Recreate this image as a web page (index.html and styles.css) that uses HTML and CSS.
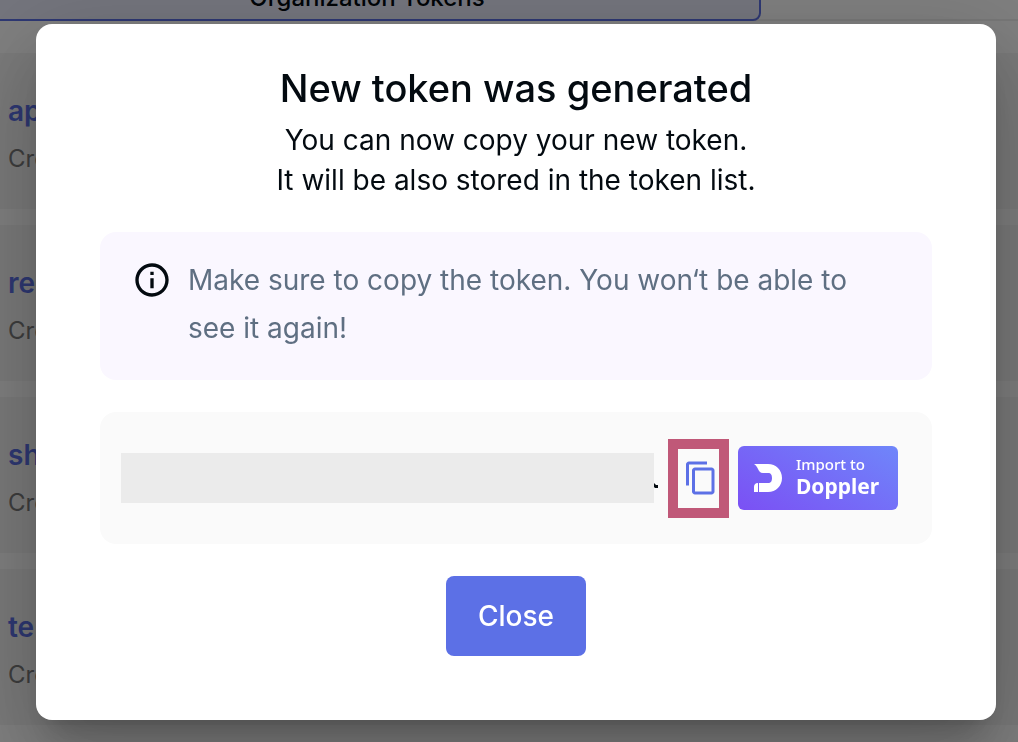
FILE: index.html
```html
<!DOCTYPE html>
<html lang="en">
<head>
    <meta charset="UTF-8">
    <meta name="viewport" content="width=device-width, initial-scale=1.0">
    <title>Organization Tokens</title>
    <link rel="stylesheet" href="styles.css">
</head>
<body>
<main class="page">
    <nav class="tabs">
        <button class="tab" type="button">Organization Tokens</button>
    </nav>
    <ul class="token-list">
        <li class="token-item"><a href="#">ap</a><p>Cre</p></li>
        <li class="token-item"><a href="#">re</a><p>Cre</p></li>
        <li class="token-item"><a href="#">sh</a><p>Cre</p></li>
        <li class="token-item"><a href="#">te</a><p>Cre</p></li>
    </ul>
</main>

<!-- dialog -->
<div class="overlay">
    <section class="modal" role="dialog" aria-modal="true" aria-labelledby="modal-title">
        <h2 id="modal-title">New token was generated</h2>
        <p class="subtitle">You can now copy your new token.<br>It will be also stored in the token list.</p>

        <div class="alert">
            <svg class="icon-info" viewBox="0 0 24 24" aria-hidden="true">
                <path d="M11 7h2v2h-2zm0 4h2v6h-2zm1-9C6.480 2 2 6.480 2 12s4.480 10 10 10 10-4.480 10-10S17.520 2 12 2zm0 18c-4.410 0-8-3.590-8-8s3.590-8 8-8 8 3.590 8 8-3.590 8-8 8z"/>
            </svg>
            <p>Make sure to copy the token. You won‘t be able to see it again!</p>
        </div>

        <div class="token-box">
            <div class="token-value"></div>
            <svg class="token-tail" viewBox="0 0 4 50" aria-hidden="true">
                <path d="M0 30L2 32H4V35H1L0 34z"/>
            </svg>
            <button class="copy" type="button" aria-label="Copy token">
                <svg viewBox="0 0 24 24" aria-hidden="true">
                    <path d="M16 1H4c-1.100 0-2 .9-2 2v14h2V3h12V1zm3 4H8c-1.100 0-2 .9-2 2v14c0 1.100.9 2 2 2h11c1.100 0 2-.9 2-2V7c0-1.100-.9-2-2-2zm0 16H8V7h11v14z"/>
                </svg>
            </button>
            <button class="doppler" type="button">
                <svg viewBox="0 0 28 28" aria-hidden="true">
                    <path d="M0 0H14C22 0 28 6 28 14S22 28 14 28H5V19H14C17 19 18 17 18 14S17 9 14 9H9C6 9 5 7 4 5C3 3 2 1 0 0z"/>
                    <path d="M4 19V28H0V23C0 21 1 19 4 19z"/>
                </svg>
                <span class="doppler-text"><span>Import to</span><strong>Doppler</strong></span>
            </button>
        </div>

        <button class="close" type="button">Close</button>
    </section>
</div>
</body>
</html>
```

FILE: styles.css
```css
* {
    margin: 0;
    padding: 0;
    box-sizing: border-box;
}

body {
    height: 100vh;
    overflow: hidden;
    font-family: Inter, "Liberation Sans", sans-serif;
    font-size: 28px;
    color: #030a10;
    background: #fff;
}

button {
    font-family: inherit;
    border: none;
    cursor: pointer;
}

/* page behind the dialog, scrolled a little */
.page {
    margin: -27px 0 0 -27px;
}

.tabs {
    display: flex;
    height: 48px;
    border-bottom: 2px solid #eee;
}

.tab {
    width: 788px;
    height: 48px;
    font-size: 24px;
    font-weight: 500;
    color: #030a10;
    background: #e8ebfb;
    border: 2px solid #5c70e6;
    border-radius: 8px;
}

.token-list {
    display: grid;
    gap: 16px;
    padding-top: 32px;
    list-style: none;
}

.token-item {
    height: 156px;
    padding: 38px 35px;
    background: #f5f5f5;
}

.token-item a {
    display: block;
    line-height: 40px;
    font-weight: 600;
    color: #5c70e6;
    text-decoration: none;
}

.token-item p {
    margin-top: 8px;
    line-height: 40px;
    font-size: 24px;
    color: #7b7b7b;
}

.overlay {
    position: fixed;
    inset: 0;
    padding: 24px 22px 22px 36px;
    background: rgba(0, 0, 0, .5);
}

.modal {
    display: flex;
    flex-direction: column;
    align-items: center;
    padding: 40px 64px 64px;
    background: #fff;
    border-radius: 16px;
    box-shadow: 0 22px 30px -14px rgba(0, 0, 0, .2), 0 48px 76px 6px rgba(0, 0, 0, .14), 0 18px 92px 16px rgba(0, 0, 0, .12);
}

.modal h2 {
    line-height: 48px;
    font-size: 38px;
    font-weight: 500;
}

.subtitle {
    margin: 8px 0 32px;
    line-height: 40px;
    text-align: center;
}

.alert {
    display: flex;
    gap: 16px;
    width: 100%;
    padding: 24px 32px 28px;
    line-height: 48px;
    color: #5f6f82;
    background: #faf7ff;
    border-radius: 16px;
}

.icon-info {
    flex: none;
    width: 40px;
    height: 48px;
    fill: #030a10;
}

.token-box {
    display: flex;
    align-items: center;
    width: 100%;
    height: 132px;
    margin: 32px 0;
    padding: 0 34px 0 21px;
    background: #fafafa;
    border-radius: 16px;
}

.token-value {
    flex: 1;
    height: 50px;
    background: #ebebeb;
}

.token-tail {
    width: 4px;
    height: 50px;
    fill: #030a10;
}

.copy {
    display: flex;
    align-items: center;
    justify-content: flex-end;
    width: 61px;
    height: 79px;
    margin: 0 9px 0 10px;
    background: #fafafa;
    border: 10px solid #c05878;
}

.copy svg {
    width: 36px;
    height: 36px;
    fill: #5c70e6;
}

.doppler {
    display: flex;
    align-items: center;
    gap: 14px;
    width: 160px;
    height: 64px;
    padding-left: 16px;
    color: #fff;
    background: linear-gradient(30deg, #7b50f4, #6f86fa);
    border-radius: 6px;
}

.doppler svg {
    width: 28px;
    height: 28px;
    fill: #fff;
}

.doppler-text {
    display: flex;
    flex-direction: column;
    padding-bottom: 4px;
    font-family: "Noto Sans", sans-serif;
    font-size: 15px;
    line-height: 20px;
    font-weight: 500;
    text-align: left;
}

.doppler-text strong {
    font-size: 21px;
    line-height: 24px;
    font-weight: 700;
}

.close {
    height: 80px;
    padding: 0 32px;
    font-size: 28px;
    font-weight: 500;
    color: #fff;
    background: #5c70e6;
    border-radius: 8px;
}
```
